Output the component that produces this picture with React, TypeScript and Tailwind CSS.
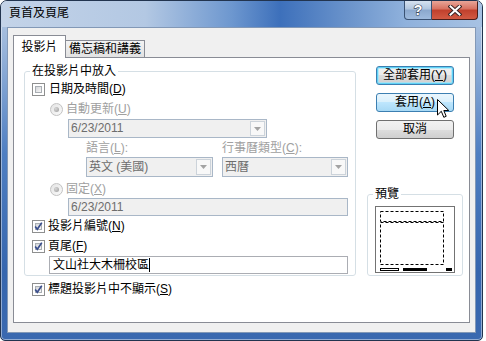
import React from 'react'

const Check: React.FC<{ checked?: boolean }> = ({ checked }) => (
  <span className="relative w-[13px] h-[13px] shrink-0 border border-[#8e8f8f] bg-white">
    <span className="absolute inset-[2px] border border-[#a9aeb3] bg-[linear-gradient(135deg,#d4d6d9,#f7f7f7)]" />
    {checked && (
      <svg className="absolute left-0 top-0" width="11" height="11" viewBox="0 0 11 11">
        <path d="M2.2 5.6 L4.3 8.3 L8.8 1.6" fill="none" stroke="#3b4f8d" strokeWidth="1.7" />
      </svg>
    )}
  </span>
)

const Radio: React.FC = () => (
  <span className="relative w-[13px] h-[13px] shrink-0 rounded-full border border-[#c2c2c2] bg-[linear-gradient(135deg,#e4e4e4,#fafafa)]">
    <span className="absolute inset-[3px] rounded-full bg-[radial-gradient(circle_at_35%_35%,#d6d6d6,#9c9c9c)]" />
  </span>
)

const Combo: React.FC<{ value: string; className: string }> = ({ value, className }) => (
  <div className={`flex items-center border border-[#a9b7c7] bg-[#f0f0f0] ${className}`}>
    <span className="flex-1 pl-[2px] text-[#6d6d6d] leading-[15px]">{value}</span>
    <span className="w-[15px] self-stretch my-[1px] mr-[1px] border border-[#ccd3da] bg-[#f8f8f8] flex items-center justify-center">
      <svg width="7" height="4" viewBox="0 0 7 4">
        <path d="M0 0 H7 L3.5 4 Z" fill="#a3a3a3" />
      </svg>
    </span>
  </div>
)

const App: React.FC = () => {
  return (
    <div className="relative w-[486px] h-[341px] bg-white text-[12px] text-black font-['Liberation_Sans','Noto_Sans_CJK_TC',sans-serif]">
      <div className="flex flex-col w-[483px] h-[341px] rounded-t-[7px] rounded-b-[5px] border border-[#22344f] overflow-hidden bg-[linear-gradient(180deg,#b5c9e2_0%,#9db8dc_12%,#4f7fc2_45%,#3666ae_80%,#3a69b0_100%)] shadow-[inset_0_0_0_1px_rgba(255,255,255,0.45)]">
        {/* title bar */}
        <div className="flex items-start h-[26px] shrink-0 bg-[linear-gradient(90deg,#c3d3e8_0%,#b3c8e3_30%,#6d97cf_48%,#3d70bb_58%,#6a93cb_72%,#8fb1dc_84%,#a7c2e3_100%)]">
          <span className="pl-[8px] pt-[5px] leading-[15px]">頁首及頁尾</span>
          <div className="ml-auto mr-[4px] flex">
            <div className="w-[28px] h-[19px] rounded-bl-[4px] border border-t-0 border-[#3a5273] bg-[linear-gradient(180deg,#d6e2f0_0%,#b0c5df_45%,#8ba8cd_50%,#9fbbde_100%)] flex items-center justify-center">
              <svg width="12" height="14" viewBox="0 0 12 14">
                <text x="6" y="12" textAnchor="middle" fontSize="14" fontWeight="bold" fontFamily="Liberation Sans" fill="#fff" stroke="#3b4a60" strokeWidth="1.2" paintOrder="stroke">?</text>
              </svg>
            </div>
            <div className="w-[46px] h-[19px] rounded-br-[4px] border border-t-0 border-l-0 border-[#4a1e1a] bg-[linear-gradient(180deg,#e8a598_0%,#d7705f_45%,#c0402c_50%,#d25a43_100%)] flex items-center justify-center">
              <svg width="14" height="11" viewBox="0 0 14 11">
                <path d="M2.5 1.5 L11.5 9.5 M11.5 1.5 L2.5 9.5" stroke="#3a2424" strokeWidth="4" strokeLinecap="square" />
                <path d="M2.5 1.5 L11.5 9.5 M11.5 1.5 L2.5 9.5" stroke="#ffffff" strokeWidth="2" strokeLinecap="square" />
              </svg>
            </div>
          </div>
        </div>

        {/* client */}
        <div className="mx-[6px] h-[306px] shrink-0 border border-[#8298b6] bg-[#f0f0f0] pl-[5px] pt-[7px]">
          <div className="flex items-end h-[22px]">
            <div className="relative z-10 -mb-px w-[53px] h-[23px] border border-b-0 border-[#898c95] bg-white flex items-center justify-center leading-[14px]">
              投影片
            </div>
            <div className="w-[79px] h-[17px] border border-l-0 border-b-0 border-[#898c95] bg-[linear-gradient(180deg,#f3f3f3,#e2e2e2)] flex items-center justify-center leading-[14px]">
              備忘稿和講義
            </div>
          </div>

          <div className="flex w-[457px] h-[266px] border border-[#898c95] bg-white">
            {/* left column */}
            <div className="ml-[10px] mt-[6px] flex flex-col">
              <fieldset className="w-[332px] rounded-[3px] border border-[#d5dfe5] pl-[7px] pb-[1px] flex flex-col">
                <legend className="ml-[-2px] px-[2px] leading-[14px]">在投影片中放入</legend>
                <div className="mt-[5px] flex items-center gap-[4px] h-[13px]">
                  <Check />
                  <span className="leading-[13px]">日期及時間(<u>D</u>)</span>
                </div>
                <div className="mt-[7px] ml-[18px] flex items-center gap-[3px] h-[13px] text-[#a0a0a0]">
                  <Radio />
                  <span className="leading-[13px]">自動更新(<u>U</u>)</span>
                </div>
                <Combo value="6/23/2011" className="mt-[3px] ml-[36px] w-[199px] h-[19px]" />
                <div className="mt-[3px] ml-[54px] flex h-[14px] leading-[14px] text-[#a0a0a0]">
                  <span className="w-[136px]">語言(<u>L</u>):</span>
                  <span>行事曆類型(<u>C</u>):</span>
                </div>
                <div className="mt-[2px] ml-[54px] flex gap-[9px]">
                  <Combo value="英文 (美國)" className="w-[127px] h-[20px]" />
                  <Combo value="西曆" className="w-[126px] h-[20px]" />
                </div>
                <div className="mt-[6px] ml-[18px] flex items-center gap-[3px] h-[13px] text-[#a0a0a0]">
                  <Radio />
                  <span className="leading-[13px]">固定(<u>X</u>)</span>
                </div>
                <div className="mt-[2px] ml-[36px] w-[280px] h-[18px] border border-[#a9b7c7] bg-[#f0f0f0] pl-[2px] text-[#6d6d6d] leading-[16px]">
                  6/23/2011
                </div>
                <div className="mt-[4px] flex items-center gap-[3px] h-[13px]">
                  <Check checked />
                  <span className="leading-[13px]">投影片編號(<u>N</u>)</span>
                </div>
                <div className="mt-[7px] flex items-center gap-[3px] h-[13px]">
                  <Check checked />
                  <span className="leading-[13px]">頁尾(<u>F</u>)</span>
                </div>
                <div className="mt-[3px] ml-[17px] w-[299px] h-[18px] border border-[#abadb3] bg-white pl-[3px] flex items-center">
                  <span className="leading-[16px]">文山社大木柵校區</span>
                  <span className="w-px h-[14px] bg-black" />
                </div>
              </fieldset>
              <div className="mt-[7px] ml-[8px] flex items-center gap-[3px] h-[13px]">
                <Check checked />
                <span className="leading-[13px]">標題投影片中不顯示(<u>S</u>)</span>
              </div>
            </div>

            {/* right column */}
            <div className="ml-[11px] w-[96px] flex flex-col">
              <div className="ml-[9px] mt-[8px] flex flex-col gap-[8px]">
                <button className="w-[78px] h-[19px] rounded-[3px] border border-[#3c7fb1] bg-[linear-gradient(180deg,#f2f2f2_0%,#ebebeb_50%,#dddddd_50%,#cfcfcf_100%)] shadow-[inset_0_0_0_1px_#5fd3f7,inset_0_0_0_2px_rgba(150,230,255,0.6)] leading-[15px]">
                  全部套用(<u>Y</u>)
                </button>
                <button className="w-[78px] h-[19px] rounded-[3px] border border-[#3c7fb1] bg-[linear-gradient(180deg,#eaf6fd_0%,#d9f0fc_50%,#bee6fd_50%,#a7d9f5_100%)] leading-[15px]">
                  套用(<u>A</u>)
                </button>
                <button className="w-[78px] h-[19px] rounded-[3px] border border-[#707070] bg-[linear-gradient(180deg,#f2f2f2_0%,#ebebeb_50%,#dddddd_50%,#cfcfcf_100%)] leading-[15px]">
                  取消
                </button>
              </div>

              <fieldset className="mt-[48px] w-[96px] rounded-[3px] border border-[#d5dfe5] pl-[7px] pb-[2px]">
                <legend className="ml-[-2px] px-[2px] leading-[14px]">預覽</legend>
                <svg className="mt-[5px] block" width="80" height="67" viewBox="0 0 80 67">
                  <rect x="0.5" y="0.5" width="79" height="66" fill="#fff" stroke="#737373" />
                  <rect x="5.5" y="5.5" width="63" height="10" fill="none" stroke="#000" strokeDasharray="3 2" />
                  <rect x="5.5" y="16.5" width="63" height="42" fill="none" stroke="#000" strokeDasharray="3 2" />
                  <rect x="5.5" y="62.5" width="18" height="2" fill="none" stroke="#000" />
                  <rect x="28" y="62" width="24" height="3" fill="#000" />
                  <rect x="71" y="62" width="6" height="3" fill="#000" />
                </svg>
              </fieldset>
            </div>
          </div>
        </div>
      </div>

      {/* mouse cursor */}
      <svg className="absolute left-[437px] top-[99px]" width="13" height="20" viewBox="0 0 13 20">
        <path d="M0.5 0.5 V16 L4.3 12.3 L6.8 18.3 L9.2 17.3 L6.8 11.5 H11.8 Z" fill="#fff" stroke="#000" strokeWidth="1" strokeLinejoin="round" />
      </svg>
    </div>
  )
}

export default App
